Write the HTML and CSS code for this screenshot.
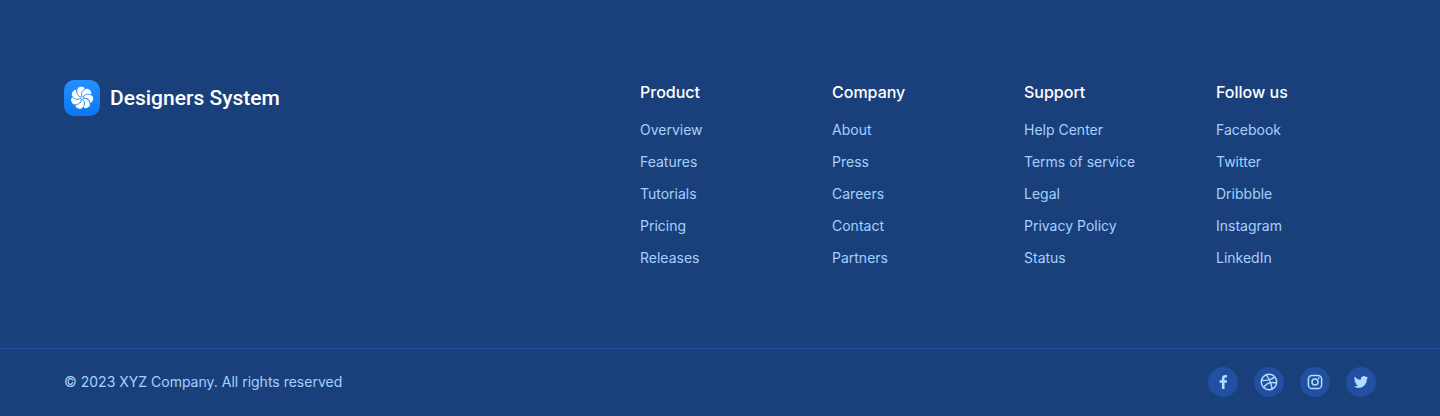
FILE: index.html
```html
<!DOCTYPE html>
<html lang="en">
<head>
<meta charset="utf-8">
<meta name="viewport" content="width=device-width, initial-scale=1">
<title>Designers System</title>
<link rel="stylesheet" href="styles.css">
</head>
<body>
<footer class="footer">
  <div class="footer-main">
    <a class="brand" href="#">
      <svg class="brand-mark" viewBox="0 0 36 36" aria-hidden="true">
        <defs>
          <linearGradient id="mark-fill" x1="0" y1="0" x2="0" y2="1">
            <stop offset="0" stop-color="#2590ff"/>
            <stop offset="1" stop-color="#0b78f2"/>
          </linearGradient>
          <circle id="lobe" cx="18" cy="10.900" r="4.100"/>
          <path id="gap" d="M18 17C15.600 14.500 15.600 11.200 18.600 8"/>
        </defs>
        <rect width="36" height="36" rx="10" fill="url(#mark-fill)"/>
        <g fill="#fff" transform="rotate(-6 18 18)">
          <circle cx="18" cy="18" r="7"/>
          <use href="#lobe"/>
          <use href="#lobe" transform="rotate(51.430 18 18)"/>
          <use href="#lobe" transform="rotate(102.860 18 18)"/>
          <use href="#lobe" transform="rotate(154.290 18 18)"/>
          <use href="#lobe" transform="rotate(205.710 18 18)"/>
          <use href="#lobe" transform="rotate(257.140 18 18)"/>
          <use href="#lobe" transform="rotate(308.570 18 18)"/>
        </g>
        <g fill="none" stroke="#1a84f8" stroke-width=".9" transform="rotate(17 18 18)">
          <use href="#gap"/>
          <use href="#gap" transform="rotate(51.430 18 18)"/>
          <use href="#gap" transform="rotate(102.860 18 18)"/>
          <use href="#gap" transform="rotate(154.290 18 18)"/>
          <use href="#gap" transform="rotate(205.710 18 18)"/>
          <use href="#gap" transform="rotate(257.140 18 18)"/>
          <use href="#gap" transform="rotate(308.570 18 18)"/>
        </g>
      </svg>
      <span class="brand-name">Designers System</span>
    </a>
    <nav class="links" aria-label="Footer">
      <section class="column">
        <h2 class="column-title">Product</h2>
        <ul class="column-list">
          <li><a href="#">Overview</a></li>
          <li><a href="#">Features</a></li>
          <li><a href="#">Tutorials</a></li>
          <li><a href="#">Pricing</a></li>
          <li><a href="#">Releases</a></li>
        </ul>
      </section>
      <section class="column">
        <h2 class="column-title">Company</h2>
        <ul class="column-list">
          <li><a href="#">About</a></li>
          <li><a href="#">Press</a></li>
          <li><a href="#">Careers</a></li>
          <li><a href="#">Contact</a></li>
          <li><a href="#">Partners</a></li>
        </ul>
      </section>
      <section class="column">
        <h2 class="column-title">Support</h2>
        <ul class="column-list">
          <li><a href="#">Help Center</a></li>
          <li><a href="#">Terms of service</a></li>
          <li><a href="#">Legal</a></li>
          <li><a href="#">Privacy Policy</a></li>
          <li><a href="#">Status</a></li>
        </ul>
      </section>
      <section class="column">
        <h2 class="column-title">Follow us</h2>
        <ul class="column-list">
          <li><a href="#">Facebook</a></li>
          <li><a href="#">Twitter</a></li>
          <li><a href="#">Dribbble</a></li>
          <li><a href="#">Instagram</a></li>
          <li><a href="#">LinkedIn</a></li>
        </ul>
      </section>
    </nav>
  </div>
  <div class="footer-bar">
    <p class="copyright">© 2023 XYZ Company. All rights reserved</p>
    <div class="social">
      <a class="social-link" href="#" aria-label="Facebook">
        <svg viewBox="0 0 20 20" aria-hidden="true"><path fill="currentColor" d="M11.500 17V10.700H13.600L14 8.200H11.500V6.700C11.500 5.900 11.900 5.400 12.900 5.400H14V3.200C13.600 3.100 13 3 12.300 3C10.200 3 8.900 4.200 8.900 6.400V8.200H6.600V10.700H8.900V17Z"/></svg>
      </a>
      <a class="social-link" href="#" aria-label="Dribbble">
        <svg viewBox="0 0 20 20" aria-hidden="true"><g fill="none" stroke="currentColor" stroke-width="1.500"><circle cx="10" cy="10" r="7.700"/><path d="M7.300 2.900C10.200 6.500 12 10.500 13.200 17M2.500 8.600C8 8.700 13 7.800 15.600 4.700M4.700 15.600C7.200 11.200 12 9.600 17.600 10.900"/></g></svg>
      </a>
      <a class="social-link" href="#" aria-label="Instagram">
        <svg viewBox="0 0 20 20" aria-hidden="true"><g fill="none" stroke="currentColor" stroke-width="1.500"><rect x="3.400" y="3.400" width="13.200" height="13.200" rx="3.600"/><circle cx="10" cy="10" r="3"/></g><circle cx="13.800" cy="6.200" r=".9" fill="currentColor"/></svg>
      </a>
      <a class="social-link" href="#" aria-label="Twitter">
        <svg viewBox="0 0 24 24" aria-hidden="true"><path fill="currentColor" transform="translate(3.400 3.400) scale(.72)" d="M23.950 4.570a10 10 0 0 1-2.820.77 4.960 4.960 0 0 0 2.160-2.720c-.95.550-2 .95-3.130 1.180a4.920 4.920 0 0 0-8.380 4.480C7.690 8.100 4.070 6.130 1.640 3.160a4.900 4.900 0 0 0 1.520 6.570 4.900 4.900 0 0 1-2.230-.61v.06a4.920 4.920 0 0 0 3.950 4.830 5 5 0 0 1-2.210.08 4.940 4.940 0 0 0 4.600 3.420A9.870 9.870 0 0 1 0 19.540a14 14 0 0 0 7.550 2.210c9.050 0 14-7.500 14-13.980 0-.21 0-.42-.02-.63a9.900 9.900 0 0 0 2.420-2.570z"/></svg>
      </a>
    </div>
  </div>
</footer>
</body>
</html>
```
FILE: styles.css
```css
* {
  box-sizing: border-box;
}

body {
  margin: 0;
  background: #1a407c;
  font-family: Inter, "Liberation Sans", sans-serif;
}

a {
  color: inherit;
  text-decoration: none;
}

.footer {
  color: #a5d0ff;
  font-size: 14px;
  line-height: 20px;
}

.footer-main {
  display: flex;
  flex-wrap: wrap;
  justify-content: space-between;
  align-items: flex-start;
  gap: 32px;
  padding: 80px 64px;
}

.brand {
  display: flex;
  align-items: center;
  gap: 10px;
  color: #fff;
}

.brand-mark {
  width: 36px;
  height: 36px;
}

.brand-name {
  font-family: Roboto, sans-serif;
  font-size: 21px;
  font-weight: 500;
  line-height: 28px;
}

.links {
  display: grid;
  grid-template-columns: repeat(4, 160px);
  gap: 32px;
}

.column-title {
  margin: 0 0 16px;
  color: #fff;
  font-size: 16px;
  font-weight: 500;
  line-height: 24px;
}

.column-list {
  display: grid;
  gap: 12px;
  margin: 0;
  padding: 0;
  list-style: none;
}

.column-list a {
  display: block;
}

.footer-bar {
  display: flex;
  flex-wrap: wrap;
  align-items: center;
  justify-content: space-between;
  gap: 16px;
  padding: 18px 64px;
  border-top: 1px solid #2450a0;
}

.copyright {
  margin: 0;
}

.social {
  display: flex;
  gap: 16px;
}

.social-link {
  display: grid;
  place-items: center;
  width: 30px;
  height: 30px;
  border-radius: 50%;
  background: #2250a0;
  color: #b3dcff;
}

.social-link svg {
  width: 20px;
  height: 20px;
}
```
